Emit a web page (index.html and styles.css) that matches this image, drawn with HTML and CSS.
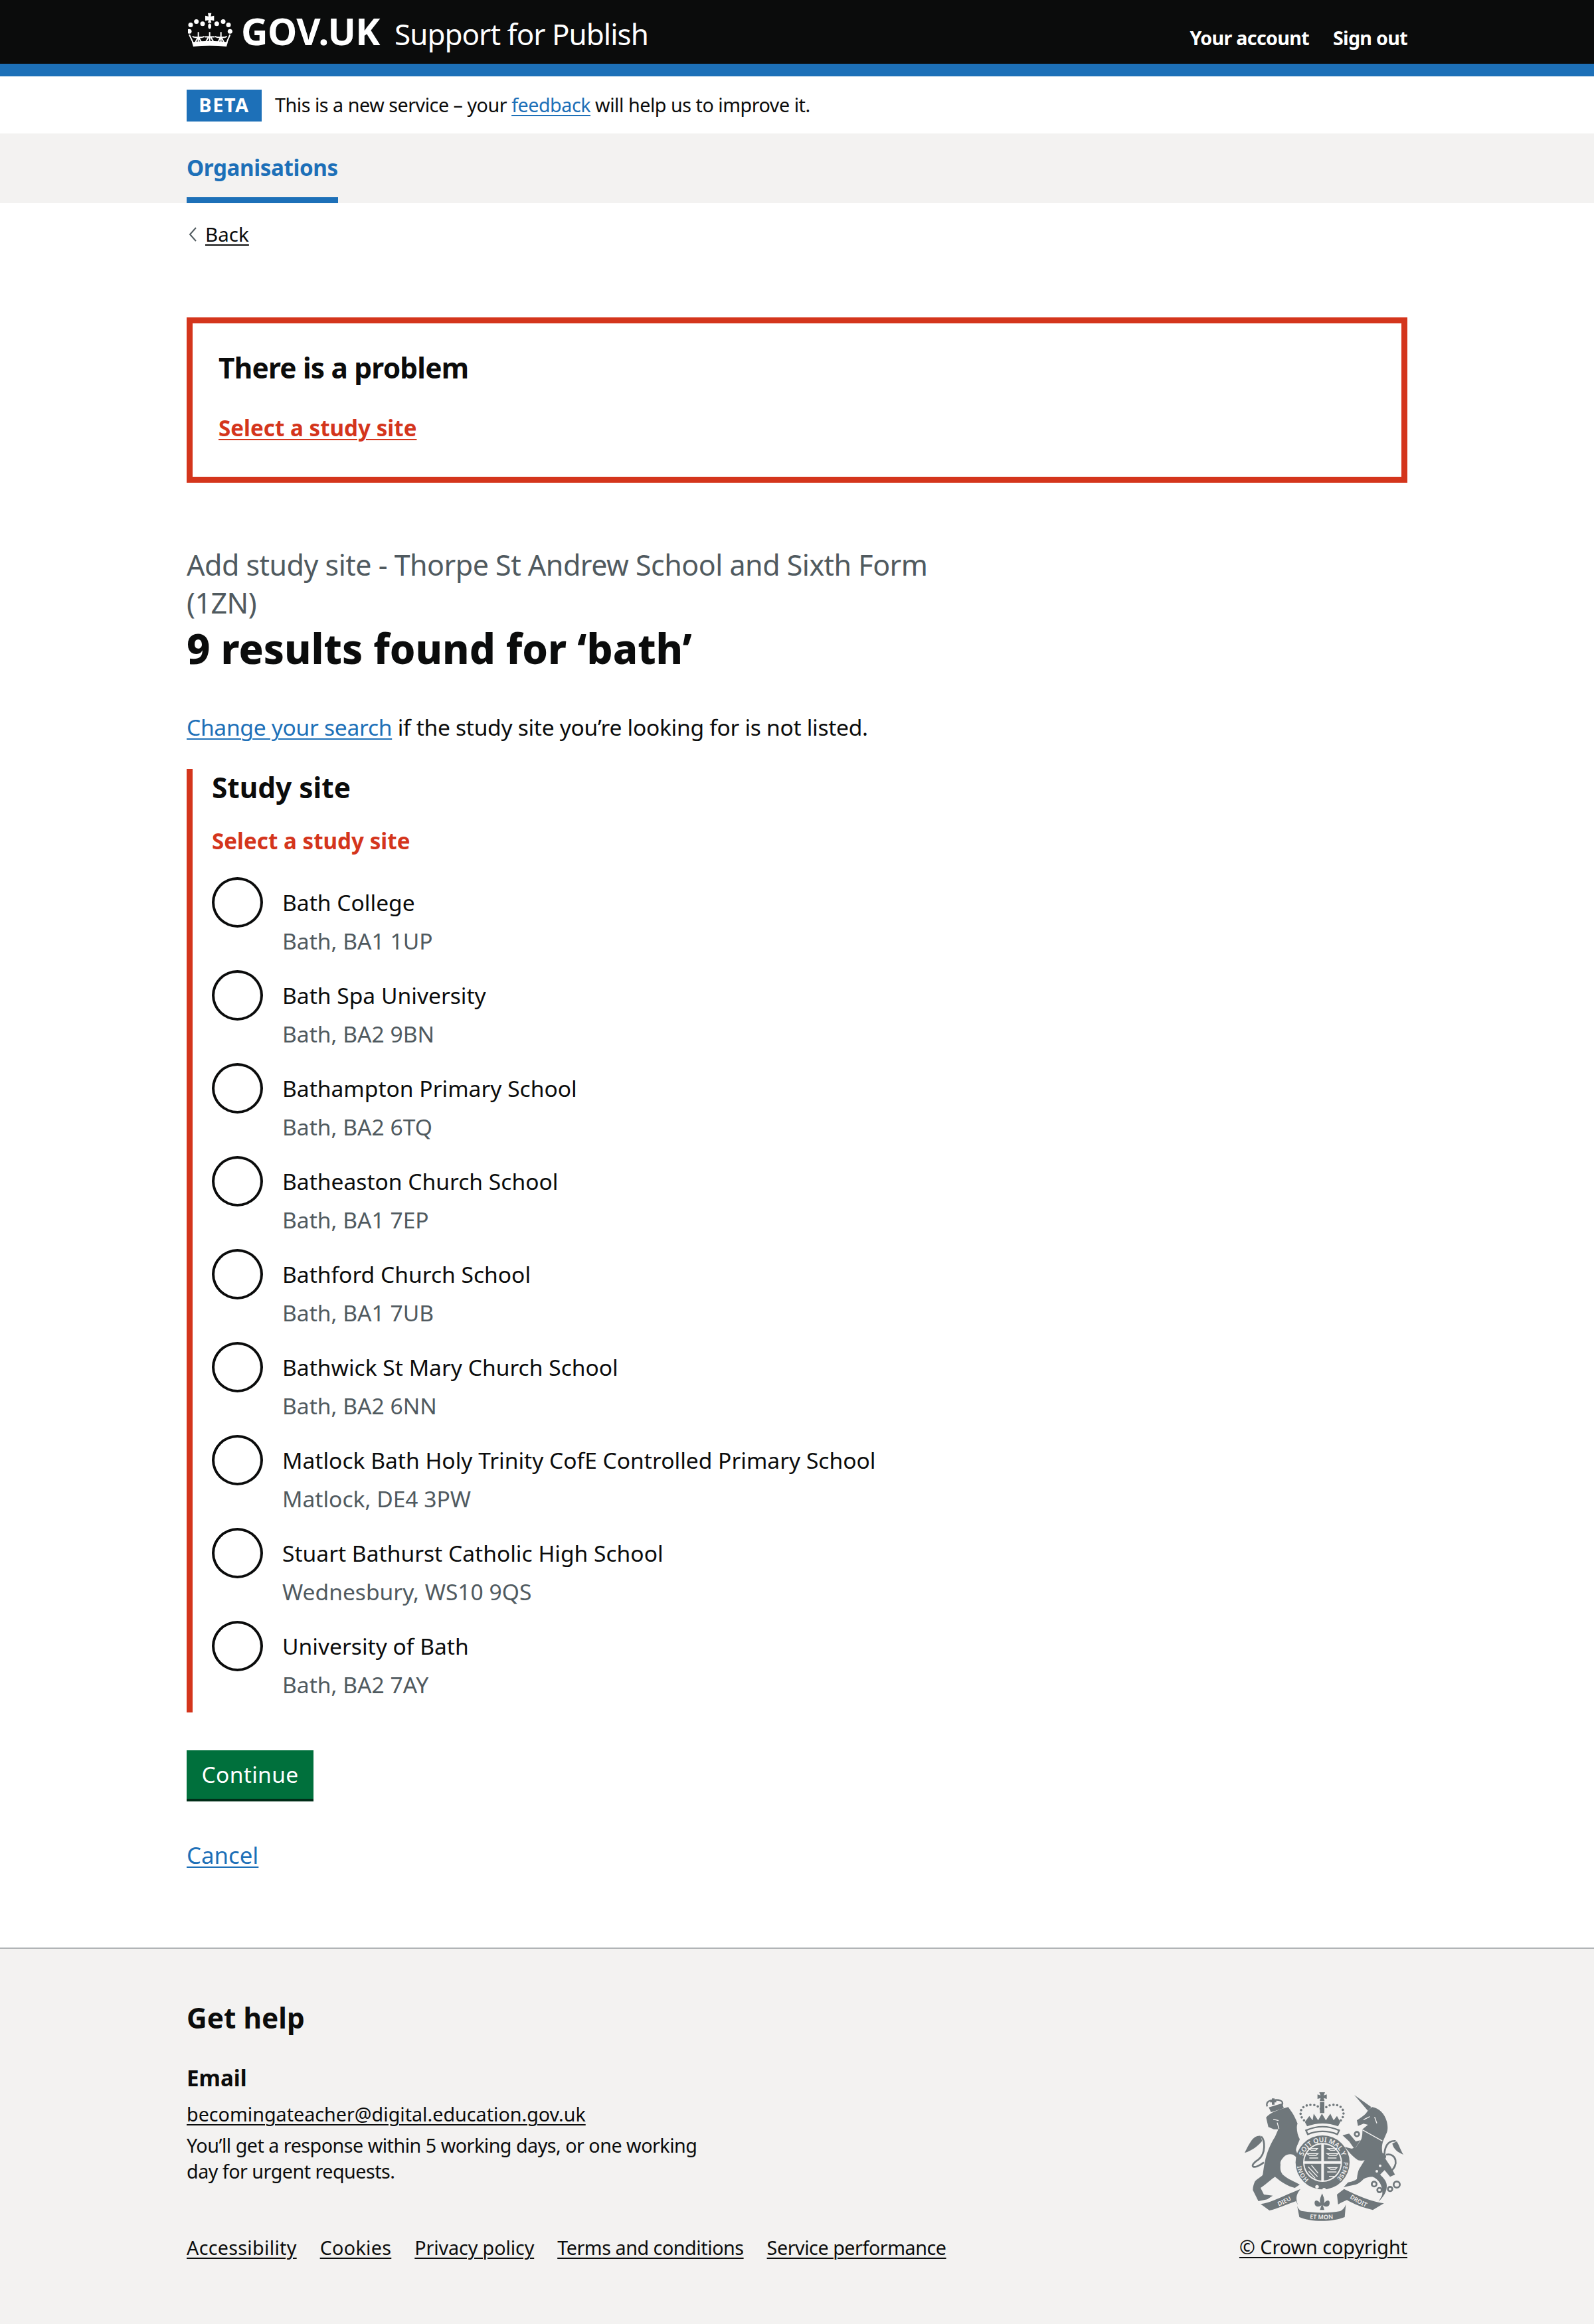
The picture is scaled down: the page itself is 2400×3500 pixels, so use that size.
FILE: index.html
```html
<!DOCTYPE html>
<html lang="en">
<head>
<meta charset="utf-8">
<title>Add study site</title>
<link rel="stylesheet" href="styles.css">
</head>
<body>
<header class="header">
  <div class="container header-inner">
    <svg class="crown" viewBox="38 13 204 155" aria-hidden="true">
      <g fill="#fff">
        <circle cx="44" cy="97" r="10.5"/><circle cx="50" cy="68" r="10.5"/><circle cx="76" cy="53" r="10.5"/><circle cx="104" cy="63" r="10.5"/>
        <circle cx="168" cy="63" r="10.5"/><circle cx="197" cy="53" r="10.5"/><circle cx="221" cy="68" r="10.5"/><circle cx="228" cy="97" r="10.5"/>
        <path d="M128 15h16l-3 15 15-3v22l-15-3 3 13h-16l3-13-15 3V27l15 3z"/>
        <ellipse cx="136" cy="74" rx="7" ry="12"/>
        <path d="M56 146Q136 136 218 146L212 166Q136 158 62 166Z"/>
      </g>
      <g class="crown-lines">
        <path d="M44 112L62 150M228 112L212 150"/>
        <path d="M85 100V146M67 124H103M67 124L58 120M103 124L112 120M72 146L82 126M98 146L88 126"/>
        <path d="M136 100V146M114 122H158M118 146L130 124M154 146L142 124"/>
        <path d="M187 100V146M169 124H205M160 120L169 124M214 120L205 124M174 146L184 126M200 146L190 126"/>
      </g>
    </svg>
    <a class="logo-text" href="#">GOV.UK</a>
    <a class="service-name" href="#">Support for Publish</a>
    <nav class="account-nav">
      <a href="#">Your account</a>
      <a href="#">Sign out</a>
    </nav>
  </div>
</header>

<div class="container beta">
  <strong class="tag">BETA</strong>
  <span class="beta-text">This is a new service – your <a class="link" href="#">feedback</a> will help us to improve it.</span>
</div>

<nav class="primary-nav">
  <div class="container">
    <a class="primary-link" href="#">Organisations</a>
  </div>
</nav>

<main class="container">
  <a class="back" href="#">
    <svg class="back-icon" viewBox="0 0 12 22" aria-hidden="true"><path d="M11 1L2 11l9 10" fill="none" stroke="#505a5f" stroke-width="2"/></svg>
    <span>Back</span>
  </a>

  <section class="error-summary">
    <h2 class="error-title">There is a problem</h2>
    <p class="error-item"><a href="#">Select a study site</a></p>
  </section>

  <div class="two-thirds">
    <span class="caption">Add study site - Thorpe St Andrew School and Sixth Form (1ZN)</span>
    <h1 class="title">9 results found for ‘bath’</h1>
    <p class="lead"><a class="link" href="#">Change your search</a> if the study site you’re looking for is not listed.</p>
  </div>

  <form class="form-group">
    <h2 class="legend">Study site</h2>
    <p class="error-message">Select a study site</p>
    <div class="radios">
      <label class="radio"><input type="radio" name="site"><span class="radio-text"><span class="radio-label">Bath College</span><span class="radio-hint">Bath, BA1 1UP</span></span></label>
      <label class="radio"><input type="radio" name="site"><span class="radio-text"><span class="radio-label">Bath Spa University</span><span class="radio-hint">Bath, BA2 9BN</span></span></label>
      <label class="radio"><input type="radio" name="site"><span class="radio-text"><span class="radio-label">Bathampton Primary School</span><span class="radio-hint">Bath, BA2 6TQ</span></span></label>
      <label class="radio"><input type="radio" name="site"><span class="radio-text"><span class="radio-label">Batheaston Church School</span><span class="radio-hint">Bath, BA1 7EP</span></span></label>
      <label class="radio"><input type="radio" name="site"><span class="radio-text"><span class="radio-label">Bathford Church School</span><span class="radio-hint">Bath, BA1 7UB</span></span></label>
      <label class="radio"><input type="radio" name="site"><span class="radio-text"><span class="radio-label">Bathwick St Mary Church School</span><span class="radio-hint">Bath, BA2 6NN</span></span></label>
      <label class="radio"><input type="radio" name="site"><span class="radio-text"><span class="radio-label">Matlock Bath Holy Trinity CofE Controlled Primary School</span><span class="radio-hint">Matlock, DE4 3PW</span></span></label>
      <label class="radio"><input type="radio" name="site"><span class="radio-text"><span class="radio-label">Stuart Bathurst Catholic High School</span><span class="radio-hint">Wednesbury, WS10 9QS</span></span></label>
      <label class="radio"><input type="radio" name="site"><span class="radio-text"><span class="radio-label">University of Bath</span><span class="radio-hint">Bath, BA2 7AY</span></span></label>
    </div>
  </form>

  <button class="button" type="button">Continue</button>
  <p class="cancel"><a class="link" href="#">Cancel</a></p>
</main>

<footer class="footer">
  <div class="container footer-inner">
    <div class="footer-left">
      <h2 class="footer-title">Get help</h2>
      <h3 class="footer-sub">Email</h3>
      <p class="footer-email"><a href="#">becomingateacher@digital.education.gov.uk</a></p>
      <p class="footer-note">You’ll get a response within 5 working days, or one working day for urgent requests.</p>
      <ul class="footer-links">
        <li class="wide"><a href="#">Accessibility</a></li>
        <li class="wide"><a href="#">Cookies</a></li>
        <li class="tight"><a href="#">Privacy policy</a></li>
        <li class="narrow"><a href="#">Terms and conditions</a></li>
        <li class="narrow"><a href="#">Service performance</a></li>
      </ul>
    </div>
    <div class="footer-right">
      <svg class="crest" viewBox="100 65 720 585" aria-hidden="true">
        <defs>
          <path id="garter-top" d="M363 385A92 92 0 0 1 547 385"/>
          <path id="garter-left" d="M405 470A97 97 0 0 1 358 385"/>
          <path id="garter-right" d="M547 360A95 95 0 0 1 500 470"/>
          <path id="rib-left" d="M232 592C265 580 300 565 338 540"/>
          <path id="rib-mid" d="M368 634C410 644 495 644 532 634"/>
          <path id="rib-right" d="M558 532C590 555 630 580 672 596"/>
        </defs>
        <g class="crest-dark">
          <path d="M200 182C215 165 240 150 300 135 310 150 325 165 342 210 335 225 340 260 352 280 345 300 335 315 335 330L350 372 322 350C305 345 295 350 285 355 270 370 262 380 265 395 262 420 268 430 275 440 300 462 325 470 352 485L330 500C300 495 270 475 240 450 225 460 205 480 175 500L190 530 230 535 205 552 165 560 140 510C140 495 145 480 150 470 165 455 180 450 185 440 188 420 190 400 195 380 200 350 220 300 240 270L255 235 235 235 210 225Z"/>
          <path d="M175 265C140 262 125 300 103 342 140 330 165 310 182 288Z"/>
          <path d="M212 136L272 118 280 140 222 158Z"/>
          <path d="M226 96h12v8h8v10h-8v10h-12v-10h-8v-10h8z"/>
          <path d="M598 80L675 135 660 152Z"/>
          <path d="M610 195C625 185 640 175 650 165 660 150 670 140 680 135 710 140 735 165 745 200 750 220 750 240 745 250L730 285C722 305 722 325 725 340 735 365 750 385 760 400L782 440 760 450 735 420 715 440C730 455 745 470 745 490 745 515 735 535 708 562 718 545 725 535 725 525 725 505 720 490 715 480 705 465 695 455 680 450 665 450 650 455 640 460 630 470 620 480 605 485L550 497 570 475C585 472 600 468 610 460 612 440 615 425 620 415L645 375C635 378 625 378 615 375 600 365 590 355 580 345L555 315 575 320 600 325 630 280C635 265 635 250 635 235L660 215 640 210 615 220Z"/>
          <path d="M545 262L575 255 605 290 625 285 600 325 575 290Z"/>
          <path d="M790 290C800 305 805 325 820 350 795 340 775 325 770 300Z"/>
          <path d="M440 68h26l-6 14 14-4v20l-14-4 4 14h-22l4-14-14 4V78l14 4z"/>
          <path d="M443 112h20v50h-20z"/>
          <path d="M375 202L395 175 410 195 415 165 435 195 452 165 470 195 490 165 505 195 520 175 535 202 525 222C480 205 430 205 385 222Z"/>
          <circle cx="455" cy="385" r="122"/>
          <path d="M175 573C220 568 280 535 355 505 335 530 332 550 345 580L335 560C290 575 250 595 215 602Z"/>
          <path d="M340 580C345 600 360 605 365 605 420 615 490 615 535 605 545 600 555 590 560 575L555 632C500 655 400 655 350 632Z"/>
          <path d="M520 530L552 505C610 535 670 560 732 570L682 600C640 590 600 575 565 555 555 560 540 565 525 575Z"/>
          <path d="M453 525C445 545 440 555 445 570 430 550 415 555 420 575 425 590 445 585 450 578L443 600H463L456 578C461 585 481 590 486 575 491 555 476 550 461 570 466 555 461 545 453 525Z"/>
        </g>
        <g class="crest-line">
          <path d="M190 385C145 420 115 405 165 372 200 345 195 285 178 268"/>
          <path d="M735 370C730 315 750 285 785 288"/>
          <path d="M742 350C790 340 800 400 762 425"/>
          <path class="thin" d="M205 132C195 108 225 103 232 104 255 100 282 105 272 125"/>
          <path class="thin" d="M380 240C430 218 480 218 530 240L522 258C480 240 430 240 388 258Z"/>
          <circle cx="610" cy="257" r="10"/><circle cx="598" cy="335" r="12"/><circle cx="688" cy="483" r="11"/><circle cx="712" cy="510" r="10"/><circle cx="760" cy="505" r="10"/><circle cx="790" cy="485" r="14"/><circle cx="728" cy="358" r="10"/>
        </g>
        <path class="crest-dots" d="M385 205C340 180 345 122 410 125 430 125 445 140 453 150 465 140 480 125 500 125 560 120 562 185 525 205"/>
        <circle class="crest-light" cx="455" cy="385" r="88"/>
        <path class="crest-dark-fill" d="M449 379H373.2A82 82 0 0 1 449 303.2ZM461 379V303.2A82 82 0 0 1 536.8 379ZM461 391H536.8A82 82 0 0 1 461 466.8ZM449 391V466.8A82 82 0 0 1 373.2 391Z"/>
        <path class="crest-light-stroke" d="M392 322h40l-8 8h-20zM384 345h50l-8 8h-30zM395 365h40M478 322h40l-8 8h-20zM475 345h50l-8 8h-30zM478 365h40M480 408h40l-8 8h-20zM476 428h42M484 448h24M390 405l42 44M405 398l30 36M392 425l30 32"/>
        <path class="crest-face" d="M232 190l24 6M250 205l8 28M668 178l-28 14M690 180l10 28M635 238L725 288"/>
        <circle class="crest-pale" cx="715" cy="400" r="6"/>
        <circle class="crest-pale" cx="700" cy="425" r="6"/>
        <circle class="crest-pale" cx="430" cy="495" r="8"/>
        <circle class="crest-pale" cx="462" cy="508" r="8"/>
        <text class="crest-text"><textPath href="#garter-top" startOffset="50%" text-anchor="middle">SOIT QUI MAL Y</textPath></text>
        <text class="crest-text small"><textPath href="#garter-left" startOffset="50%" text-anchor="middle">HONI</textPath></text>
        <text class="crest-text small"><textPath href="#garter-right" startOffset="50%" text-anchor="middle">PENSE</textPath></text>
        <text class="crest-text small"><textPath href="#rib-left" startOffset="50%" text-anchor="middle">DIEU</textPath></text>
        <text class="crest-text small"><textPath href="#rib-mid" startOffset="50%" text-anchor="middle">ET MON</textPath></text>
        <text class="crest-text small"><textPath href="#rib-right" startOffset="50%" text-anchor="middle">DROIT</textPath></text>
      </svg>
      <a class="copyright" href="#">© Crown copyright</a>
    </div>
  </div>
</footer>
</body>
</html>
```
FILE: styles.css
```css
* { box-sizing: border-box; }
html, body { margin: 0; padding: 0; }
body {
  font-family: "Noto Sans", sans-serif;
  color: #0b0c0c;
  background: #fff;
}
h1, h2, h3, p, ul { margin: 0; padding: 0; }
a { color: inherit; text-decoration-thickness: 2px; text-underline-offset: 4px; }
.container { width: 1838px; margin: 0 auto; }
.link { color: #1d70b8; }

/* header */
.header {
  height: 115px;
  background: #0b0c0c;
  border-bottom: 19px solid #1d70b8;
  color: #fff;
}
.header-inner { display: flex; align-items: baseline; padding-top: 16px; }
.header a { color: #fff; text-decoration: none; }
.crown { width: 68px; height: 52px; margin: 3px 0 0 2px; align-self: flex-start; flex: none; }
.crown-lines { fill: none; stroke: #fff; stroke-width: 6; }
.logo-text { font-size: 56px; line-height: 60px; font-weight: 700; margin-left: 12px; letter-spacing: -.5px; }
.service-name { font-size: 44px; line-height: 60px; margin-left: 22px; letter-spacing: -1px; }
.account-nav { margin-left: auto; display: flex; gap: 36px; font-size: 28.7px; line-height: 40px; font-weight: 700; letter-spacing: -.7px; }

/* beta */
.beta { display: flex; align-items: baseline; gap: 20px; height: 86px; padding-top: 19px; }
.tag {
  width: 113px; height: 48px; background: #1d70b8; color: #fff;
  font-size: 29px; line-height: 46px; font-weight: 700; letter-spacing: 1.5px; text-align: center;
}
.beta-text { font-size: 28.7px; line-height: 48px; letter-spacing: -.47px; }

/* primary nav */
.primary-nav { height: 105px; background: #f3f2f1; }
.primary-link {
  display: inline-block; height: 105px; padding-top: 22px;
  font-size: 33.2px; line-height: 60px; font-weight: 700; color: #1d70b8; text-decoration: none;
  border-bottom: 9px solid #1d70b8; letter-spacing: -.4px;
}

/* back */
.back { display: flex; align-items: center; width: max-content; margin-top: 27px; font-size: 29.5px; line-height: 40px; padding-left: 3px; gap: 13px; }
.back-icon { width: 12px; height: 22px; }
.back span { text-decoration: underline; text-decoration-thickness: 2px; text-underline-offset: 4px; }

/* error summary */
.error-summary { margin-top: 105px; border: 9px solid #d4351c; padding: 39px 39px 51px; }
.error-title { font-size: 42.4px; line-height: 56px; font-weight: 700; letter-spacing: -.8px; }
.error-item { margin-top: 41px; font-size: 33.2px; line-height: 44px; font-weight: 700; color: #d4351c; }

/* heading */
.two-thirds { width: 1206px; margin-top: 95px; }
.caption { display: block; font-size: 43px; line-height: 57px; color: #505a5f; letter-spacing: -.52px; }
.title { font-size: 61.5px; line-height: 80px; font-weight: 800; }
.lead { margin-top: 53px; font-size: 33.6px; line-height: 52px; white-space: nowrap; letter-spacing: -.3px; }

/* form */
.form-group { margin-top: 37px; border-left: 9px solid #d4351c; padding: 0 0 16px 29px; }
.legend { font-size: 42.4px; line-height: 56px; font-weight: 700; }
.error-message { margin-top: 31px; font-size: 33.2px; line-height: 44px; font-weight: 700; color: #d4351c; }
.radios { display: flex; flex-direction: column; gap: 18px; margin-top: 32px; }
.radio { display: flex; gap: 29px; height: 122px; }
.radio input {
  appearance: none; flex: none; width: 77px; height: 76px; margin: 0;
  border: 4px solid #0b0c0c; border-radius: 50%; background: #fff;
}
.radio-text { display: flex; flex-direction: column; gap: 6px; padding-top: 12px; font-size: 33.6px; line-height: 52px; }
.radio-hint { color: #505a5f; }

/* actions */
.button {
  display: block; width: 191px; height: 73px; margin-top: 57px; padding: 0; border: 0;
  background: #00703c; color: #fff; box-shadow: 0 4px 0 #002d18;
  font-family: inherit; font-size: 33.6px; line-height: 73px; letter-spacing: .3px;
}
.cancel { margin-top: 59px; font-size: 34.8px; line-height: 52px; }

/* footer */
.footer { margin-top: 113px; background: #f3f2f1; border-top: 2px solid #b1b4b6; padding: 76px 0 95px; }
.footer-inner { display: flex; justify-content: space-between; align-items: flex-end; }
.footer-title { font-size: 42.4px; line-height: 56px; font-weight: 700; }
.footer-sub { margin-top: 41px; font-size: 33.2px; line-height: 44px; font-weight: 700; }
.footer-email { margin-top: 12px; font-size: 28.7px; line-height: 40px; }
.footer-note { margin-top: 7px; width: 800px; font-size: 28.7px; line-height: 39px; letter-spacing: -.5px; }
.footer-links { display: flex; gap: 35px; margin-top: 76px; list-style: none; font-size: 28.7px; line-height: 40px; }
.footer-links .wide { letter-spacing: .3px; }
.footer-links .tight { letter-spacing: -.1px; }
.footer-links .narrow { letter-spacing: -.45px; }
.footer-right { display: flex; flex-direction: column; align-items: flex-end; }
.crest { display: block; width: 240px; height: 195px; margin: 0 6px 19px 0; }
.copyright { font-size: 28.7px; line-height: 40px; margin-bottom: 1px; }

/* crest parts */
.crest-dark { fill: #6f777b; }
.crest-dark-fill { fill: #6f777b; }
.crest-line { fill: none; stroke: #6f777b; stroke-width: 8; }
.crest-line .thin { stroke-width: 7; }
.crest-dots { fill: none; stroke: #6f777b; stroke-width: 11; stroke-linecap: round; stroke-dasharray: 0 17; }
.crest-light { fill: #f3f2f1; }
.crest-pale { fill: #f3f2f1; }
.crest-light-stroke { fill: none; stroke: #f3f2f1; stroke-width: 4; }
.crest-face { fill: none; stroke: #f3f2f1; stroke-width: 4; }
.crest-text { fill: #f3f2f1; font-family: "Noto Sans", sans-serif; font-size: 30px; font-weight: 600; }
.crest-text.small { font-size: 27px; }
```
